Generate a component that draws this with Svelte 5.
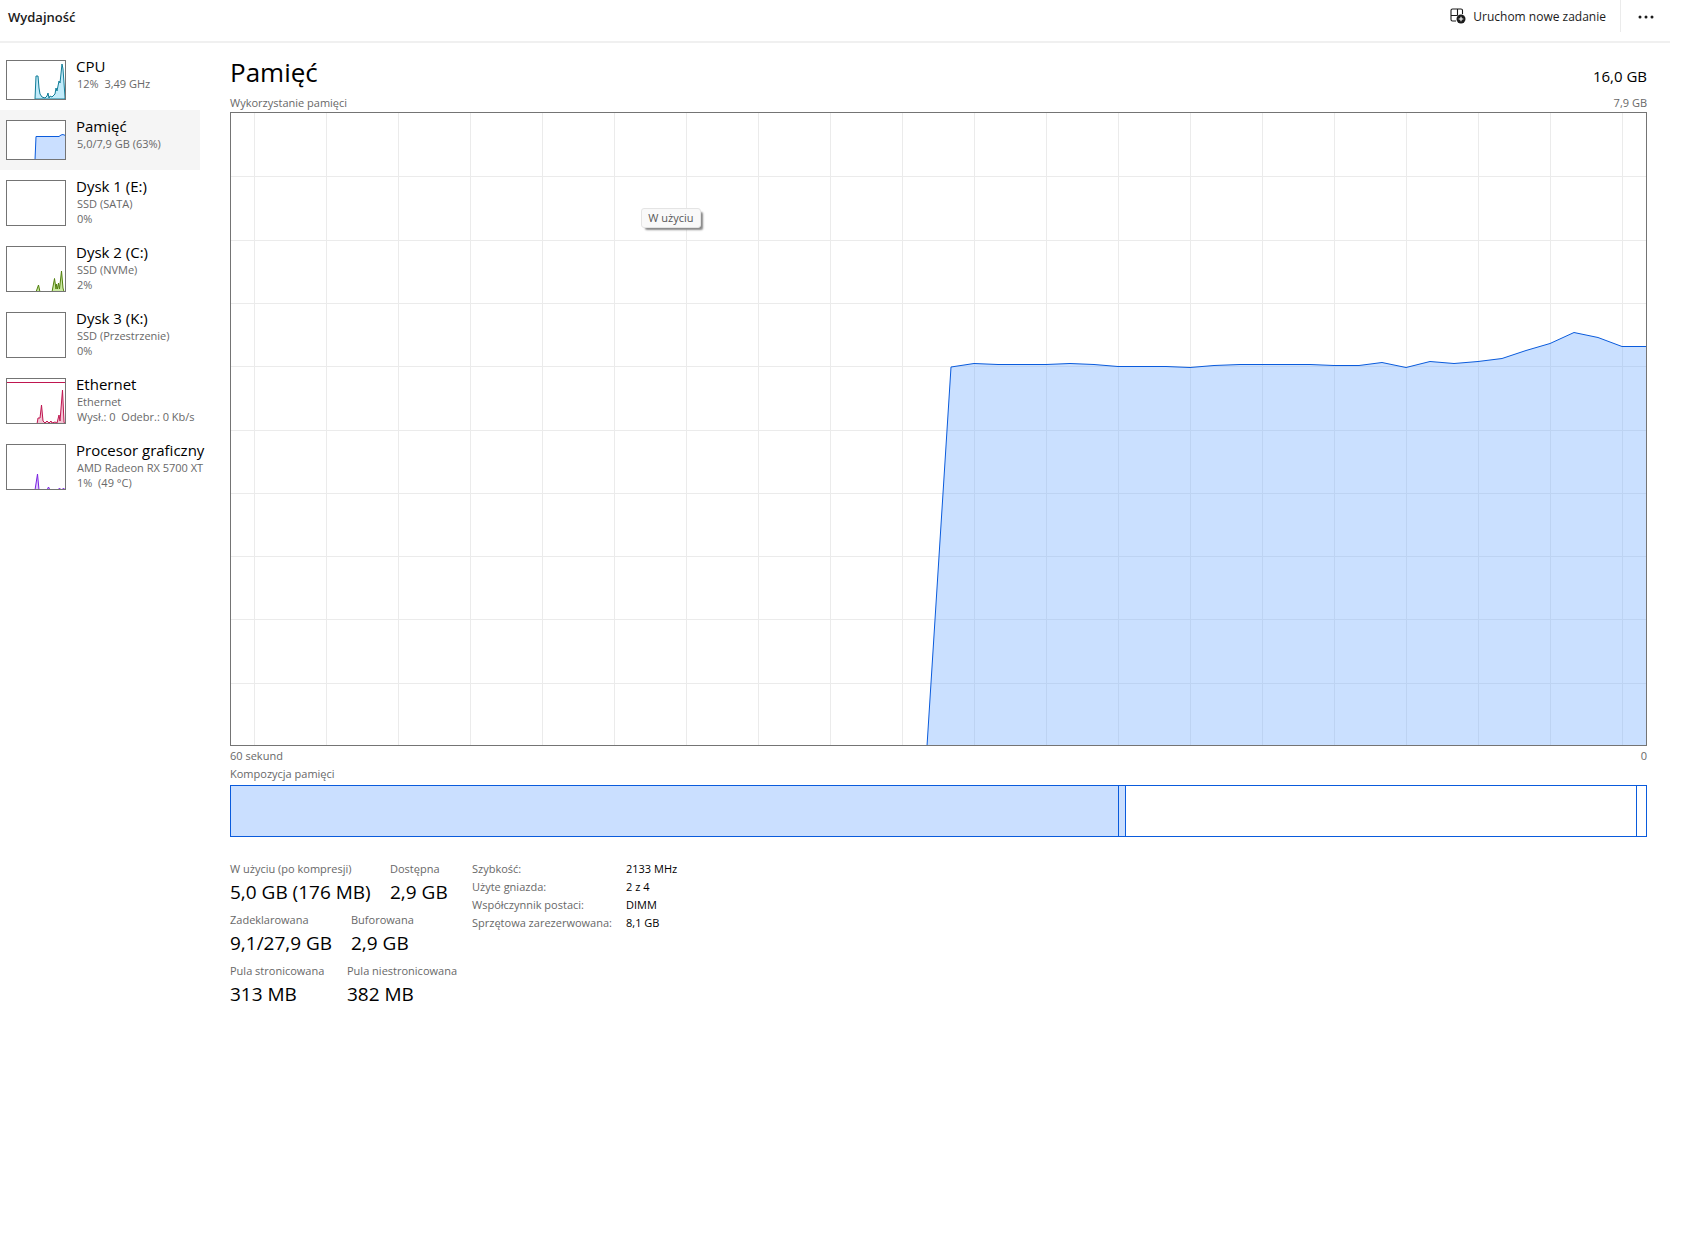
<script>
  const devices = [
    { name: 'CPU', lines: ['12%  3,49 GHz'], tone: 'cpu', h: 38,
      points: '28,38 29,15 31,15 32,27 33,33 35,36 38,37 40,35 41,32 42,37 43,35 45,36 48,33 49,27 50,30 52,20 53,22 55,3 56,8 58,36 58,38' },
    { name: 'Pamięć', lines: ['5,0/7,9 GB (63%)'], tone: 'mem', h: 38, selected: true,
      points: '28,39 29,15.5 52,15.5 54,14 56,13.5 57,14 59,14.5 59,39' },
    { name: 'Dysk 1 (E:)', lines: ['SSD (SATA)', '0%'], tone: 'disk', h: 44, points: '' },
    { name: 'Dysk 2 (C:)', lines: ['SSD (NVMe)', '2%'], tone: 'disk', h: 44,
      points: '29,45 31.5,38 33,45 45,45 47.5,31.5 49,42 49.5,37 50.5,42 51.5,36 52.5,42 54.5,24 56,41 57,45' },
    { name: 'Dysk 3 (K:)', lines: ['SSD (Przestrzenie)', '0%'], tone: 'disk', h: 44, points: '' },
    { name: 'Ethernet', lines: ['Ethernet', 'Wysł.: 0  Odebr.: 0 Kb/s'], tone: 'net', h: 44, rule: true,
      points: '30,45 31,39 33,39 34.5,26 36,42 38,44 40,42 42,44 44,42 45,44 48,43 50,44 52,36 53,42 55.5,11 57,43 58,45' },
    { name: 'Procesor graficzny', lines: ['AMD Radeon RX 5700 XT', '1%  (49 °C)'], tone: 'gpu', h: 44,
      points: '28,45 30.5,29 32,45 40,45 41.5,42 43,45 51,45 52.5,43 54,45 55,45 56.5,43 58,45' },
  ];

  // Samples of memory use; the chart is 1415 units wide and 632 high.
  const samples = [
    [696, 633], [720, 254], [743, 250.5], [767, 251.5], [815, 251.5], [839, 250.5], [863, 251.5],
    [887, 253.5], [935, 253.5], [959, 254.5], [983, 252.5], [1009, 251.5], [1079, 251.5],
    [1103, 252.5], [1128, 252.5], [1151, 249.5], [1175, 254.5], [1199, 248.5], [1223, 250.5],
    [1247, 248.5], [1271, 245.5], [1295, 237.5], [1319, 230.5], [1343, 219.5], [1367, 224.5],
    [1391, 233.5], [1416, 233.5], [1416, 633],
  ];
  const area = samples.map((p) => p.join(',')).join(' ');
  const columns = Array.from({ length: 20 }, (_, i) => 23.5 + i * 72);
  const rows = Array.from({ length: 9 }, (_, i) => Math.round((i + 1) * 63.3) + 0.5);

  const composition = [
    { name: 'W użyciu', share: 889, used: true },
    { name: 'Zmodyfikowane', share: 6, used: true },
    { name: 'Wstrzymane', share: 511, used: false },
    { name: 'Wolne', share: 9, used: false },
  ];

  const stats = [
    [['W użyciu (po kompresji)', '5,0 GB (176 MB)'], ['Dostępna', '2,9 GB']],
    [['Zadeklarowana', '9,1/27,9 GB'], ['Buforowana', '2,9 GB']],
    [['Pula stronicowana', '313 MB'], ['Pula niestronicowana', '382 MB']],
  ];
  const details = [
    ['Szybkość:', '2133 MHz'],
    ['Użyte gniazda:', '2 z 4'],
    ['Współczynnik postaci:', 'DIMM'],
    ['Sprzętowa zarezerwowana:', '8,1 GB'],
  ];
</script>

<div class="page">
  <header>
    <h1>Wydajność</h1>
    <button class="run">
      <svg width="16" height="16" viewBox="0 0 16 16" aria-hidden="true">
        <path d="M6 13H2.500A1.500 1.500 0 0 1 1 11.500V2.500A1.500 1.500 0 0 1 2.500 1H11A1.500 1.500 0 0 1 12.500 2.500V6M7.500 1V7.500M1 7.500H7.500" fill="none" stroke="#1b1b1b" stroke-width="1.1" />
        <circle cx="11" cy="11" r="4.500" fill="#1b1b1b" />
        <path d="M11 8.700v4.600M8.700 11h4.600" stroke="#fff" stroke-width="1.100" />
      </svg>
      Uruchom nowe zadanie
    </button>
    <button class="more" aria-label="Więcej opcji">
      <svg width="18" height="4" viewBox="0 0 18 4" aria-hidden="true">
        <circle cx="3" cy="2" r="1.500" /><circle cx="9" cy="2" r="1.500" /><circle cx="15" cy="2" r="1.500" />
      </svg>
    </button>
  </header>

  <div class="body">
    <nav>
      {#each devices as d}
        <button class="device {d.tone}" class:selected={d.selected}>
          <svg class="thumb" width="60" height={d.h + 2} viewBox="-1 -1 60 {d.h + 2}" aria-hidden="true">
            <rect class="back" x="-1" y="-1" width="60" height={d.h + 2} />
            <polygon points={d.points} />
            {#if d.rule}<path class="rule" d="M0 3.500H58" />{/if}
            <rect class="frame" x="-0.500" y="-0.500" width="59" height={d.h + 1} />
          </svg>
          <span class="text">
            <span class="name">{d.name}</span>
            {#each d.lines as line}<span class="line">{line}</span>{/each}
          </span>
        </button>
      {/each}
    </nav>

    <main>
      <div class="title">
        <h2>Pamięć</h2>
        <span class="total">16,0 GB</span>
      </div>
      <div class="caption top"><span>Wykorzystanie pamięci</span><span>7,9 GB</span></div>
      <div class="chart">
        <svg viewBox="0 0 1415 632" preserveAspectRatio="none" role="img" aria-label="Wykorzystanie pamięci">
          {#each columns as x}<line x1={x} x2={x} y1="0" y2="632" />{/each}
          {#each rows as y}<line x1="0" x2="1415" y1={y} y2={y} />{/each}
          <polygon points={area} />
        </svg>
        <div class="tip" role="tooltip">W użyciu</div>
      </div>
      <div class="caption axis"><span>60 sekund</span><span>0</span></div>
      <div class="caption comp">Kompozycja pamięci</div>
      <div class="composition">
        {#each composition as c}
          <div class:used={c.used} style="flex-grow: {c.share}" title={c.name}></div>
        {/each}
      </div>

      <div class="info">
        <div class="stats">
          {#each stats as row, i}
            <dl class="row r{i}">
              {#each row as [label, value]}
                <div><dt>{label}</dt><dd>{value}</dd></div>
              {/each}
            </dl>
          {/each}
        </div>
        <table>
          <tbody>
            {#each details as [label, value]}
              <tr><th scope="row">{label}</th><td>{value}</td></tr>
            {/each}
          </tbody>
        </table>
      </div>
    </main>
  </div>
</div>

<style>
  :global(body) {
    background: #fff;
  }
  .page {
    padding-right: 22px;
    font-family: 'Segoe UI', 'Open Sans', 'Noto Sans', sans-serif;
    font-size: 11px;
    line-height: 15px;
    color: #000;
  }
  h1, h2, dl, dd {
    margin: 0;
    font-weight: 400;
  }
  button {
    border: 0;
    padding: 0;
    background: none;
    font: inherit;
    color: inherit;
    text-align: left;
  }
  header {
    display: flex;
    align-items: flex-start;
    height: 41px;
    border-bottom: 2px solid #f0f0f0;
    padding-left: 8px;
  }
  h1 {
    flex: 1;
    font-size: 13px;
    font-weight: 600;
    line-height: 34px;
    color: #1b1b1b;
  }
  .run {
    display: flex;
    align-items: center;
    gap: 7px;
    height: 32px;
    padding-right: 14px;
    font-size: 12px;
    color: #1b1b1b;
    border-right: 1px solid #ebebeb;
    white-space: nowrap;
  }
  .more {
    display: flex;
    align-items: center;
    justify-content: center;
    width: 49px;
    height: 33px;
  }
  .more svg {
    fill: #1b1b1b;
  }
  .body {
    display: flex;
  }
  nav {
    flex: none;
    width: 200px;
    padding-top: 7px;
  }
  .device {
    display: flex;
    width: 100%;
    padding: 10px 6px;
    gap: 10px;
  }
  .selected {
    background: #f5f5f5;
  }
  .thumb {
    flex: none;
  }
  .back {
    fill: #fff;
  }
  .frame {
    fill: none;
    stroke: #747474;
  }
  .thumb polygon {
    stroke-width: 1;
  }
  .cpu polygon { fill: #c2ebfa; stroke: #117d98; }
  .mem polygon { fill: #cadfff; stroke: #0a5bdc; }
  .disk polygon { fill: #c9e8a0; stroke: #52800d; }
  .net polygon { fill: #f3c5d4; stroke: #bf1650; }
  .gpu polygon { fill: #e0ccfb; stroke: #7a22e0; }
  .rule {
    stroke: #bf1650;
  }
  .text {
    display: flex;
    flex-direction: column;
    flex: none;
    width: 128px;
    margin: -4px 0 -10px;
    white-space: pre;
  }
  .name {
    font-size: 15px;
    line-height: 20px;
  }
  .line {
    padding-left: 1px;
    color: #686868;
  }
  main {
    flex: 1;
    min-width: 0;
    padding: 10px 23px 0 30px;
  }
  .title {
    display: flex;
    justify-content: space-between;
    align-items: baseline;
    height: 38px;
    line-height: 38px;
  }
  h2 {
    font-size: 26px;
  }
  .total {
    font-size: 15px;
  }
  .caption {
    display: flex;
    justify-content: space-between;
    color: #686868;
  }
  .top {
    padding: 4px 0 2px;
  }
  .axis {
    padding: 2px 0 3px;
  }
  .comp {
    padding-bottom: 4px;
  }
  .chart {
    position: relative;
    border: 1px solid #747474;
    height: 632px;
  }
  .chart svg {
    display: block;
    width: 100%;
    height: 100%;
  }
  .chart line {
    stroke: #ebebeb;
    vector-effect: non-scaling-stroke;
  }
  .chart polygon {
    fill: rgba(104, 167, 255, 0.35);
    stroke: #0a5bdc;
    vector-effect: non-scaling-stroke;
  }
  .tip {
    position: absolute;
    left: 29%;
    top: 15%;
    padding: 1px 6px 2px;
    border: 1px solid #e4e4e4;
    border-radius: 3px;
    background: #f9f9f9;
    box-shadow: 3px 3px 2px -1px #888;
    color: #575757;
  }
  .composition {
    display: flex;
    height: 50px;
    border: 1px solid #0a5bdc;
  }
  .composition div {
    flex-basis: 0;
    box-sizing: border-box;
  }
  .composition div + div {
    border-left: 1px solid #0a5bdc;
  }
  .used {
    background: #cadfff;
  }
  .info {
    display: flex;
    padding-top: 23px;
  }
  .stats {
    width: 242px;
  }
  .row {
    display: grid;
    height: 51px;
    white-space: nowrap;
  }
  .r0 { grid-template-columns: 160px 1fr; }
  .r1 { grid-template-columns: 121px 1fr; }
  .r2 { grid-template-columns: 117px 1fr; }
  dt {
    line-height: 18px;
    color: #686868;
  }
  dd {
    font-size: 19px;
    line-height: 28px;
  }
  table {
    align-self: flex-start;
    border-collapse: collapse;
    line-height: 18px;
    white-space: nowrap;
  }
  th {
    width: 154px;
    padding: 0;
    font-weight: 400;
    text-align: left;
    color: #686868;
  }
  td {
    padding: 0;
  }
</style>
